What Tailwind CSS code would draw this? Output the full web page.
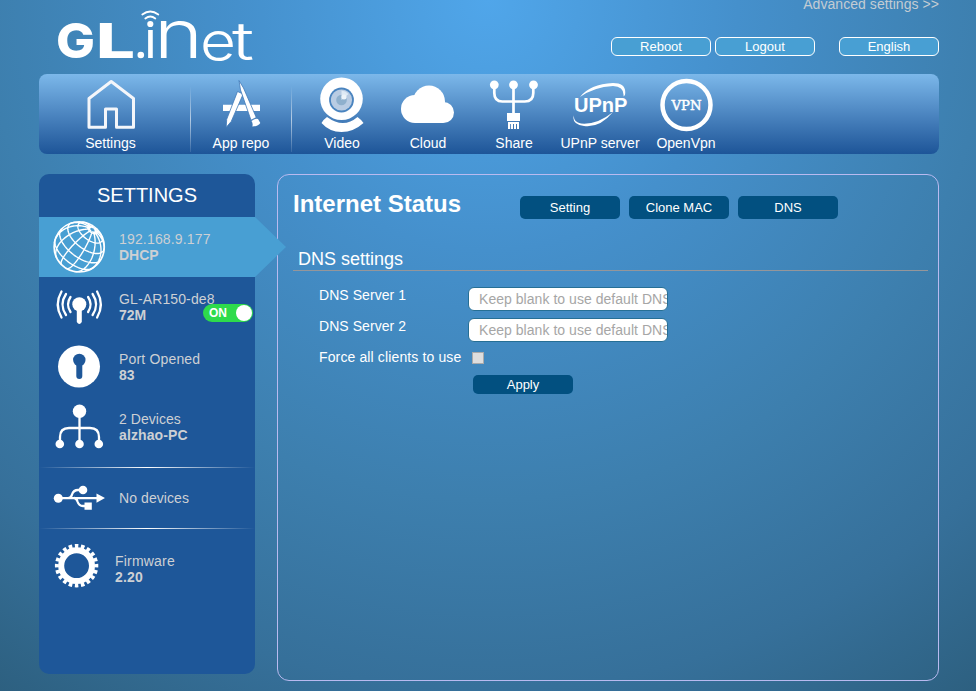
<!DOCTYPE html>
<html lang="en">
<head>
<meta charset="utf-8">
<title>GL.iNet</title>
<script src="https://cdn.jsdelivr.net/npm/@tailwindcss/browser@4"></script>
</head>
<body class="h-[691px] w-[976px] overflow-hidden bg-[radial-gradient(circle_at_488px_0px,#50a6ea_0px,#4590cc_250px,#3d7fae_500px,#36709a_690px,#2d6080_846px)] font-['Liberation_Sans',Arial,sans-serif] text-sm text-white">
<div class="ml-[39px] w-[900px]">
  <div class="flex h-[74px] w-[900px] justify-between">
    <svg class="h-[74px] w-[230px]" viewBox="39 0 230 74" fill="#fff" font-family="Inter, sans-serif">
      <text x="56" y="58" font-weight="800" font-size="48.500" textLength="39" lengthAdjust="spacingAndGlyphs">G</text>
      <text x="96" y="58" font-weight="800" font-size="48.500" textLength="39" lengthAdjust="spacingAndGlyphs">L</text>
      <circle cx="140.800" cy="55" r="3.300"/>
      <circle cx="150.300" cy="24" r="3.100"/>
      <text x="144.200" y="58" font-family="Roboto" font-weight="400" font-size="51">ı</text>
      <text x="154" y="58" font-weight="300" font-size="67" textLength="49" lengthAdjust="spacingAndGlyphs">n</text>
      <text x="200" y="59.500" font-weight="300" font-size="53" textLength="36" lengthAdjust="spacingAndGlyphs">e</text>
      <text x="232" y="60" font-weight="300" font-size="53" textLength="22" lengthAdjust="spacingAndGlyphs">t</text>
      <g fill="none" stroke="#fff" stroke-linecap="round" stroke-width="1.800"><path d="M142.300 14.500q8-6 16 0"/><path d="M145.300 18.500q5-4 10 0"/></g>
    </svg>
    <div class="flex flex-col items-end">
      <a class="-mt-1 h-4 leading-4 tracking-[.06px] text-[#c3ccd3]">Advanced settings &gt;&gt;</a>
      <div class="mt-[25px] flex gap-1 text-[13px] leading-[17px]">
        <button class="h-[19px] w-[100px] rounded-md border border-white bg-[#489fd3]">Reboot</button>
        <button class="h-[19px] w-[100px] rounded-md border border-white bg-[#489fd3]">Logout</button>
        <button class="ml-5 h-[19px] w-[100px] rounded-md border border-white bg-[#489fd3]">English</button>
      </div>
    </div>
  </div>

  <nav class="flex h-20 w-[900px] rounded-lg bg-linear-to-b from-[#7cb8ea] to-[#1d5598] text-center leading-4">
    <div class="flex w-[143px] flex-col items-center">
      <svg class="mt-1 h-[57px] w-14" viewBox="82.500 78 56 57" fill="none" stroke="#f4f6fa" stroke-width="3" stroke-linejoin="round"><path d="M88.500 127.300V98.500l22.200-17 22.300 17v28.800h-17v-18.300h-11v18.300z"/></svg>
      <span>Settings</span>
    </div>
    <div class="ml-2 mt-3 h-[66px] w-px bg-linear-to-b from-white/0 via-white/60 to-white/10"></div>
    <div class="flex w-[100px] flex-col items-center">
      <svg class="mt-1 h-[57px] w-14" viewBox="213 78 56 57" fill="#fff"><path d="M223 104.700h37v6.200h-37z"/><path d="m237.500 91.500 5.700 2.500-12 27.500-5 5.800.5-8z" stroke="#3f78b8" stroke-width=".8"/><path d="m239 80.500 4.500 7.500 12.800 29.500-5.300 2.700L240.500 90z" stroke="#3f78b8" stroke-width=".8"/><path d="M251.500 121q4-3 6.500-2l2.300 4q-2 3.500-8 3.500 1-3-.8-5.500z"/></svg>
      <span>App repo</span>
    </div>
    <div class="mt-3 h-[66px] w-px bg-linear-to-b from-white/0 via-white/60 to-white/10"></div>
    <div class="ml-[7px] flex w-[86px] flex-col items-center">
      <svg class="mt-1 h-[57px] w-14 overflow-visible" viewBox="314 78 56 57"><path d="M327 117q-3 2-5.500 6 8 9 20 9t22-9q-3-4-6-6-14 12-30.500 0z" fill="#fff"/><circle cx="341.500" cy="98.800" r="21.300" fill="#fff"/><circle cx="341.500" cy="100" r="12.400" fill="#4a84bf"/><circle cx="341.500" cy="100" r="10.600" fill="#b9cce3"/><circle cx="341.500" cy="100" r="5.300" fill="#8fb0cd"/><path d="M341.500 100V90.500a10 10 0 0 1 7 3.500z" fill="#dfeaf5"/><circle cx="344" cy="97" r="2.500" fill="#edf4fa"/></svg>
      <span>Video</span>
    </div>
    <div class="flex w-[86px] flex-col items-center">
      <svg class="mt-1 h-[57px] w-14" viewBox="400 78 56 57" fill="#fff"><circle cx="415" cy="109" r="14"/><circle cx="429" cy="101.500" r="16"/><circle cx="443.500" cy="112.500" r="10.500"/><path d="M415 104h28v19h-28z"/></svg>
      <span>Cloud</span>
    </div>
    <div class="flex w-[86px] flex-col items-center">
      <svg class="mt-1 h-[57px] w-14" viewBox="486 78 56 57" fill="#fff"><g fill="none" stroke="#fff" stroke-width="2.700"><path d="M494.300 85v8q0 8.500 8 8.500h22.500q8.500 0 8.500-8.500v-8M513.500 85v29"/></g><circle cx="494.300" cy="84.800" r="4.400"/><circle cx="513.500" cy="84.800" r="4.400"/><circle cx="533.500" cy="84.800" r="4.400"/><path d="M507 113h13v8h-13zM508 122h11v2h-11zM508 123h2.200v6H508zM511 123h2v6h-2zM514 123h2v6h-2zM517 123h2v6h-2z"/></svg>
      <span>Share</span>
    </div>
    <div class="flex w-[86px] flex-col items-center">
      <svg class="mt-1 h-[57px] w-14" viewBox="572 78 56 57" fill="#fff"><path d="M580 97q10-13 33-14 14 0 12 12l-1.500 1.500q1-10-10.500-10.500-19 1-33 11zM574 115q-1 7 7 8.500 16 1.500 32-11.500-13 16-29 14-13-2-10-11z"/><text x="574" y="112" font-family="Liberation Sans" font-weight="700" font-size="20.500" textLength="53.500" lengthAdjust="spacingAndGlyphs">UPnP</text></svg>
      <span class="whitespace-nowrap">UPnP server</span>
    </div>
    <div class="flex w-[86px] flex-col items-center">
      <svg class="mt-1 h-[57px] w-14" viewBox="658 78 56 57" fill="#fff"><circle cx="686.500" cy="105" r="24" fill="none" stroke="#fff" stroke-width="4.500"/><text x="671.500" y="109.700" font-family="DejaVu Serif" font-weight="400" font-size="13" stroke="#fff" stroke-width=".45" textLength="30" lengthAdjust="spacingAndGlyphs">VPN</text></svg>
      <span>OpenVpn</span>
    </div>
  </nav>

  <div class="mt-5 flex w-[900px] items-start">
    <aside class="h-[500px] w-[216px] shrink-0 rounded-[10px] bg-[#1e5799] leading-4 text-[#cdd0d4]">
      <h2 class="h-[43px] text-center text-xl leading-[42px] text-white">SETTINGS</h2>
      <div class="relative flex h-[60px] items-center">
        <svg class="absolute left-0 top-0 h-[60px] w-[247px]" viewBox="0 0 247 60" fill="#489fd3"><path d="M0 0h216l31 30-31 30H0z"/></svg>
        <svg class="relative ml-3 h-14 w-14" viewBox="51 219 56 56" fill="none" stroke="#fff" stroke-width="1.400"><circle cx="79.200" cy="246.900" r="25.100" stroke-width="1.600"/><path id="graticule"/></svg>
        <div class="relative ml-3"><div class="tracking-[.17px]">192.168.9.177</div><b>DHCP</b></div>
      </div>
      <div class="relative flex h-[60px] items-center">
        <svg class="ml-3 h-14 w-14" viewBox="51 279 56 56" fill="#fff"><circle cx="79.300" cy="304.300" r="7"/><path d="M76.800 308h5v14q-2.500 4-5 0z"/><g fill="none" stroke="#fff" stroke-width="2.300" stroke-linecap="round"><path d="M70.500 297q-5 7.500 0 15M66 294q-7 10.500 0 21M61.500 291.500q-7.500 13 0 26M88.100 297q5 7.500 0 15M92.600 294q7 10.500 0 21M97.100 291.500q7.500 13 0 26"/></g></svg>
        <div class="ml-3"><div class="tracking-[.12px]">GL-AR150-de8</div><b>72M</b></div>
        <div class="absolute left-[164px] top-[27px] flex h-[18px] w-[50px] items-center justify-between rounded-full bg-[#2edb4b] pl-1.5 pr-px text-xs font-bold text-white"><span>ON</span><i class="size-4 rounded-full bg-white"></i></div>
      </div>
      <div class="flex h-[60px] items-center">
        <svg class="ml-3 h-14 w-14" viewBox="51 339 56 56" fill="#fff"><circle cx="79" cy="366.500" r="21"/><g fill="#1e5799"><circle cx="79.300" cy="360" r="6.200"/><rect x="76.300" y="361" width="6" height="18" rx="3"/></g></svg>
        <div class="ml-3"><div class="tracking-[.17px]">Port Opened</div><b>83</b></div>
      </div>
      <div class="flex h-[60px] items-center">
        <svg class="ml-3 h-14 w-14" viewBox="51 399 56 56" fill="#fff"><path d="M79.500 411v33M60 444v-7q0-9 9-9h21q9 0 9 9v7" fill="none" stroke="#fff" stroke-width="2.300"/><circle cx="79.500" cy="411.200" r="6.700"/><circle cx="59.800" cy="444" r="4.300"/><circle cx="79.500" cy="444" r="4.300"/><circle cx="98.800" cy="444" r="4.300"/></svg>
        <div class="ml-3"><div class="tracking-[.05px]">2 Devices</div><b class="tracking-[.12px]">alzhao-PC</b></div>
      </div>
      <div class="mt-[10px] h-px bg-linear-to-r from-white/0 via-white to-white/0"></div>
      <div class="flex h-[60px] items-center">
        <svg class="ml-3 h-14 w-14" viewBox="51 470 56 56" fill="#fff"><circle cx="58.300" cy="498.300" r="4.500"/><circle cx="83" cy="490" r="4.300"/><path d="M96.500 493.500 105 498l-8.500 4.700zM84.500 502.500h7.300v7.300h-7.300z"/><path d="M58 498.200h40M68.500 498q2.500 0 3.500-3.500 1.500-4.500 6-4.500h4M74 498q2.500 0 3.500 3.500 1.500 4.500 5.500 4.500h2" fill="none" stroke="#fff" stroke-width="2.300"/></svg>
        <div class="ml-3 tracking-[.08px]">No devices</div>
      </div>
      <div class="h-px bg-linear-to-r from-white/0 via-white to-white/0"></div>
      <div class="mt-[10px] flex h-[60px] items-center">
        <svg class="ml-[9px] h-14 w-14" viewBox="48 541 56 56" fill="none" stroke="#fff"><circle cx="76.600" cy="565.700" r="15.400" stroke-width="6"/><circle cx="76.600" cy="565.700" r="19.700" stroke-width="4" pathLength="40" stroke-dasharray="1.150 .85" stroke-dashoffset=".575"/></svg>
        <div class="ml-[11px]"><div class="tracking-[.2px]">Firmware</div><b class="tracking-[.15px]">2.20</b></div>
      </div>
    </aside>

    <main class="ml-[22px] h-[507px] w-[662px] rounded-xl border border-[#b9baf0] px-[15px]">
      <div class="flex h-[65px]">
        <h1 class="mt-[13px] w-[227px] text-2xl leading-8 font-bold">Internet Status</h1>
        <div class="mt-[21px] flex gap-[9px] text-[13px] leading-[23px]">
          <button class="h-[23px] w-[100px] rounded-[5px] bg-[#025080]">Setting</button>
          <button class="h-[23px] w-[100px] rounded-[5px] bg-[#025080]">Clone MAC</button>
          <button class="h-[23px] w-[100px] rounded-[5px] bg-[#025080]">DNS</button>
        </div>
      </div>
      <h3 class="mr-[-5px] h-[31px] w-[635px] border-b border-[#95969a] pl-[5px] pt-[8px] text-lg leading-[22px]">DNS settings</h3>
      <form class="pl-[26px]">
        <div class="mt-4 flex h-[31px]"><label class="w-[149px] leading-4 tracking-[.06px]">DNS Server 1</label><input class="h-6 w-[200px] rounded-md border border-[#266f95] bg-white px-0 pl-[10px] text-sm tracking-[.04px] placeholder:text-[#a6a6a6]" placeholder="Keep blank to use default DNS"></div>
        <div class="flex h-[31px]"><label class="w-[149px] leading-4 tracking-[.06px]">DNS Server 2</label><input class="h-6 w-[200px] rounded-md border border-[#266f95] bg-white px-0 pl-[10px] text-sm tracking-[.04px] placeholder:text-[#a6a6a6]" placeholder="Keep blank to use default DNS"></div>
        <div class="flex h-[26px]"><label class="w-[153px] leading-4 tracking-[.13px]">Force all clients to use</label><input type="checkbox" class="mt-[3px] size-3 appearance-none border border-[#aaa] bg-[#dedede]"></div>
        <button type="button" class="ml-[154px] block h-[19px] w-[100px] rounded-[5px] bg-[#025080] text-[13px] leading-[19px]">Apply</button>
      </form>
    </main>
  </div>
</div>
<script>
  // Orthographic graticule of the globe icon, tilted towards the upper right.
  const cx = 79.2, cy = 246.9, r = 25.1, rad = Math.PI / 180;
  const p = [0.53, 0.69, 0.493];
  const n = Math.hypot(p[0], p[1]);
  const a = [p[1] / n, -p[0] / n, 0];
  const b = [p[1] * a[2] - p[2] * a[1], p[2] * a[0] - p[0] * a[2], p[0] * a[1] - p[1] * a[0]];
  let d = '';
  const line = (points) => {
    let pen = false;
    for (const [lat, lon] of points) {
      const k = Math.cos(lat * rad), s = Math.sin(lat * rad);
      const c = Math.cos(lon * rad) * k, t = Math.sin(lon * rad) * k;
      const v = [0, 1, 2].map(i => p[i] * s + a[i] * c + b[i] * t);
      if (v[2] < 0) { pen = false; continue; }
      d += (pen ? 'L' : 'M') + (cx + r * v[0]).toFixed(2) + ' ' + (cy - r * v[1]).toFixed(2);
      pen = true;
    }
  };
  for (let lon = 15; lon < 375; lon += 30) line(Array.from({ length: 60 }, (_, i) => [84 - i * 3, lon]));
  for (const lat of [78, 55, 31, 7, -18]) line(Array.from({ length: 121 }, (_, i) => [lat, i * 3]));
  document.getElementById('graticule').setAttribute('d', d);
</script>
</body>
</html>
